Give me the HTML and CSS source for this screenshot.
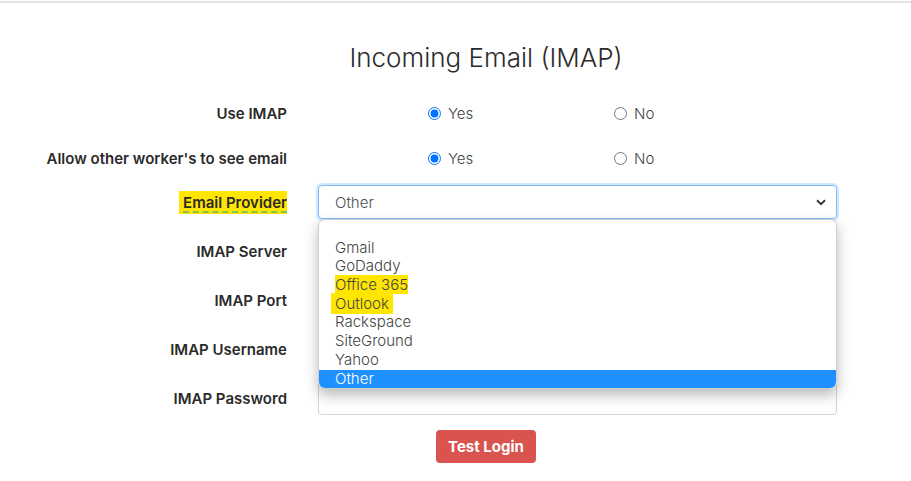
FILE: index.html
```html
<!DOCTYPE html>
<html lang="en">
<head>
    <meta charset="UTF-8">
    <meta name="viewport" content="width=device-width, initial-scale=1.0">
    <title>Incoming Email (IMAP)</title>
    <link rel="stylesheet" href="styles.css">
</head>
<body>
    <div class="topbar"></div>
    <div class="settings">
        <h2 class="section-title">Incoming Email (IMAP)</h2>

        <div class="form-row radio-row">
            <label class="field-label">Use IMAP</label>
            <div class="radio-group">
                <label class="radio"><input type="radio" name="useImap" checked> Yes</label>
                <label class="radio"><input type="radio" name="useImap"> No</label>
            </div>
        </div>
        <div class="form-row radio-row">
            <label class="field-label">Allow other worker's to see email</label>
            <div class="radio-group">
                <label class="radio"><input type="radio" name="shareEmail" checked> Yes</label>
                <label class="radio"><input type="radio" name="shareEmail"> No</label>
            </div>
        </div>
        <div class="form-row select-row">
            <label class="field-label" for="provider"><span class="mark spell">Email Provider</span></label>
            <div class="select-wrap">
                <div class="select-box" id="provider">
                    <span>Other</span>
                    <svg class="chevron" width="10" height="7" viewBox="0 0 10 7"><path d="M1 1.2 5 5.2 9 1.2" fill="none" stroke="#343a40" stroke-width="2"/></svg>
                </div>
                <ul class="option-list">
                    <li>&nbsp;</li>
                    <li>Gmail</li>
                    <li>GoDaddy</li>
                    <li><span class="mark">Office 365</span></li>
                    <li><span class="mark wide">Outlook</span></li>
                    <li>Rackspace</li>
                    <li>SiteGround</li>
                    <li>Yahoo</li>
                    <li class="selected">Other</li>
                </ul>
            </div>
        </div>
        <div class="form-row input-row">
            <label class="field-label">IMAP Server</label>
            <input class="text-input" type="text">
        </div>
        <div class="form-row input-row">
            <label class="field-label">IMAP Port</label>
            <input class="text-input" type="text">
        </div>
        <div class="form-row input-row">
            <label class="field-label">IMAP Username</label>
            <input class="text-input" type="text">
        </div>
        <div class="form-row input-row">
            <label class="field-label">IMAP Password</label>
            <input class="text-input" type="password">
        </div>

        <div class="actions">
            <button class="btn-danger">Test Login</button>
        </div>
    </div>
</body>
</html>
```

FILE: styles.css
```css
body {
    margin: 0;
    font-family: Inter, 'Noto Sans', sans-serif;
    color: #212529;
    background-color: #ffffff;
}
.topbar {
    height: 1px;
    border-bottom: 2px solid #e2e2e2;
}
.settings {
    width: 911px;
}
.section-title {
    margin: 40px 0 18px;
    padding-left: 61px;
    text-align: center;
    font-size: 26px;
    font-weight: 300;
    line-height: 30px;
    color: #2b2b2b;
}
.form-row {
    display: grid;
    grid-template-columns: 303px 519px;
    column-gap: 15px;
    align-items: center;
}
.field-label {
    padding-right: 16px;
    text-align: right;
    font-size: 15px;
    font-weight: 600;
    color: #2a2a2a;
}
.radio-row {
    height: 45px;
}
.radio-group {
    display: grid;
    grid-template-columns: 186px 186px;
    padding-left: 110px;
}
.radio {
    display: flex;
    align-items: center;
    gap: 7px;
    font-size: 15px;
    font-weight: 300;
    color: #444;
}
.radio input {
    margin: 0;
    width: 13px;
    height: 13px;
}
.select-row {
    margin-top: 4px;
}
.select-wrap {
    position: relative;
}
.select-box {
    display: flex;
    align-items: center;
    justify-content: space-between;
    height: 32px;
    padding: 0 10px 0 16px;
    border: 1px solid #80bdff;
    border-radius: 4px;
    box-shadow: 0 0 0 2px rgba(0, 123, 255, 0.18);
    font-size: 15px;
    font-weight: 300;
    color: #495057;
}
.option-list {
    position: absolute;
    top: 34px;
    left: 0;
    right: 0;
    z-index: 2;
    margin: 0;
    padding: 0;
    list-style: none;
    background-color: #ffffff;
    border: 1px solid #d0d0d0;
    border-radius: 7px;
    box-shadow: 0 6px 14px rgba(0, 0, 0, 0.28);
    overflow: hidden;
}
.option-list li {
    height: 18.7px;
    line-height: 18.7px;
    padding-left: 16px;
    font-size: 15px;
    font-weight: 300;
    color: #444;
}
.option-list li.selected {
    background-color: #1e90ff;
    color: #ffffff;
}
.mark {
    background-color: #ffe600;
}
.mark.wide {
    padding: 1px 4px;
    margin-left: -4px;
}
.spell {
    padding: 2px 0 2px 4px;
    text-decoration: underline dashed #8bc34a;
    text-decoration-thickness: 2px;
    text-underline-offset: 4px;
}
.input-row {
    margin-top: 16px;
}
.text-input {
    box-sizing: border-box;
    width: 100%;
    height: 33px;
    padding: 6px 12px;
    border: 1px solid #ced4da;
    border-radius: 4px;
    font-family: inherit;
    font-size: 15px;
}
.actions {
    margin-top: 15px;
    padding-left: 61px;
    text-align: center;
}
.btn-danger {
    width: 100px;
    height: 33px;
    border: none;
    border-radius: 4px;
    background-color: #d9534f;
    color: #ffffff;
    font-family: inherit;
    font-size: 15px;
    font-weight: 700;
    cursor: pointer;
}
```
